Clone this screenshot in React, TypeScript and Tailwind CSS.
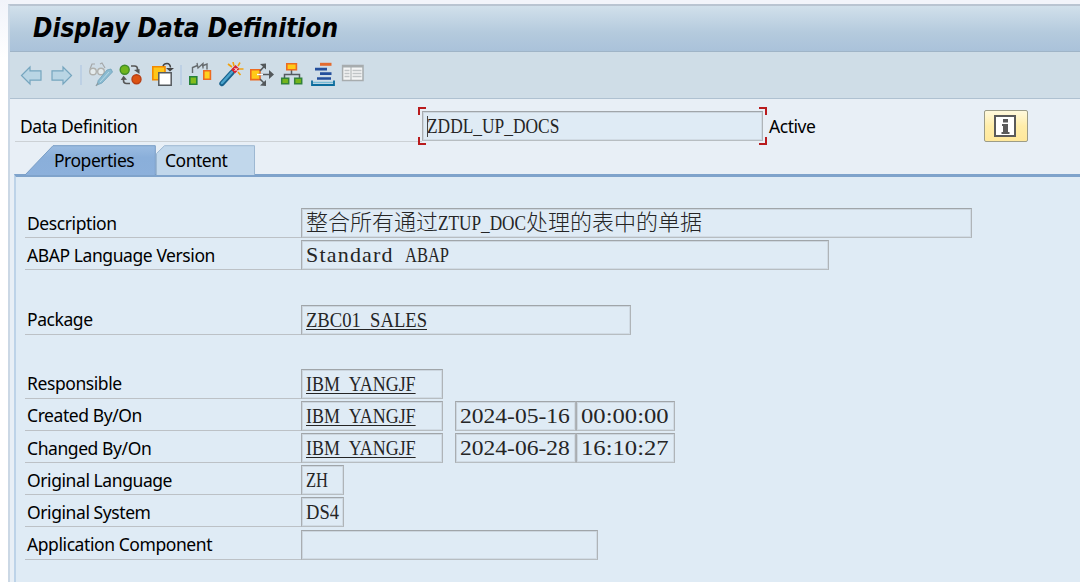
import type { ReactNode } from "react";

const sans = "font-['Noto_Sans',sans-serif]";
const serif = "font-['Liberation_Serif','Noto_Sans_CJK_SC',serif]";

// Toolbar icons share one coordinate space, each glyph shows its own slice
function Glyph({ x, w, className = "", children }: { x: number; w: number; className?: string; children: ReactNode }) {
  return (
    <svg width={w} height="26" viewBox={`${x} 62 ${w} 26`} className={`shrink-0 ${className}`} fill="none">
      {children}
    </svg>
  );
}

function Separator({ className }: { className: string }) {
  return <div className={`h-5 w-0.5 shrink-0 bg-[#bdd0e4] ${className}`} />;
}

function Toolbar() {
  return (
    <div className="flex h-[48px] items-center border-y border-t-[#9fb4c7] border-b-[#afc1d1] bg-[#cfdde7] pl-[10px]">
      <Glyph x={20} w={22}>
        <path d="M21.5 75.5 30 67v3.8h11v9.4H30V84z" fill="#b9d5e4" stroke="#76a6bf" strokeWidth="1.2" />
      </Glyph>
      <Glyph x={51} w={22} className="ml-[9px]">
        <path d="M71.5 75.5 63 67v3.8H52v9.4h11V84z" fill="#b9d5e4" stroke="#76a6bf" strokeWidth="1.2" />
      </Glyph>
      <Separator className="ml-[7px]" />
      <Glyph x={88} w={26} className="ml-[6px]">
        <path d="m90 69 2-5h3m5 0 2-1 3 5" stroke="#a5a8a9" strokeWidth="1.2" />
        <circle cx="93" cy="71.5" r="3.3" fill="#e4ebed" stroke="#b0b1ae" strokeWidth="1.4" />
        <circle cx="101" cy="71.5" r="3.3" fill="#e4ebed" stroke="#b0b1ae" strokeWidth="1.4" />
        <path d="m97 85 1.2-4.5L107 70l4-1 1.5 3L102 83z" fill="#8bbbd1" stroke="#6fa1ba" strokeWidth=".8" />
        <path d="m100 82 9-10" stroke="#b8d9e6" />
        <path d="m96 86 2-3" stroke="#909b9f" strokeWidth="1.3" />
      </Glyph>
      <Glyph x={119} w={24} className="ml-[5px]">
        <circle cx="124.7" cy="69.7" r="4.5" fill="#6fb51d" stroke="#408c29" strokeWidth="1.4" />
        <circle cx="136.5" cy="79.3" r="4.5" fill="#dd5312" stroke="#b84016" strokeWidth="1.4" />
        <path d="M131 66h3.5q3 0 3 3v2" stroke="#555" strokeWidth="1.6" />
        <path d="m134 70 5.5-1v5z" fill="#555" />
        <path d="M130 83.5h-3.5q-3 0-3-3v-2" stroke="#555" strokeWidth="1.6" />
        <path d="m120.7 80 2.8-4.3 3.5 4z" fill="#555" />
      </Glyph>
      <Glyph x={151} w={24} className="ml-[8px]">
        <path d="M152.8 66.8H165v13h-12.2z" fill="#ffc719" stroke="#f28a00" strokeWidth="1.6" />
        <path d="M158.8 72.8h12.4v12.4h-12.4z" fill="#fff" stroke="#555a5e" strokeWidth="1.5" />
        <path d="M163 66q1-2.5 4-2.5t3.5 4" stroke="#444" strokeWidth="1.5" />
        <path d="M166 68h8l-4 3.6z" fill="#444" />
      </Glyph>
      <Separator className="ml-[5px]" />
      <Glyph x={188} w={24} className="ml-[6px]">
        <path d="M192.500 73v-5.500l5-2M202 66l5-2v5.500" stroke="#666b6e" strokeWidth="1.4" />
        <path d="m197 63 1 5 5-4.500v5" stroke="#666b6e" strokeWidth="1.3" />
        <path d="M189.8 76.8h7v7.400h-7z" fill="#83bd1d" stroke="#26813b" strokeWidth="1.6" />
        <path d="M203.8 70.8h6.600v8.400h-6.600z" fill="#ffd21c" stroke="#ed6b20" strokeWidth="1.6" />
      </Glyph>
      <Glyph x={218} w={27} className="ml-[6px]">
        <path d="m222 83.500 10-11" stroke="#17618c" strokeWidth="5.4" strokeLinecap="round" />
        <path d="m222 83 10-11" stroke="#4ba3cc" strokeWidth="2.5" strokeLinecap="round" />
        <path d="m233 71.500 4.500-4.500" stroke="#d9232e" strokeWidth="5.500" />
        <path d="m228 64 4 3m1-5 1 4m4 0 2-3.5m-1 6.500h4.500m-5.500 3 2.500 3" stroke="#f3a10d" strokeWidth="1.6" />
        <path d="m234.500 68 3 3m0-3-3 3" stroke="#fff" strokeWidth="1" />
      </Glyph>
      <Glyph x={249} w={26} className="ml-[4px]">
        <path d="M250.800 69.800H260v9.800h-9.200z" fill="#ffcb17" stroke="#ed6b20" strokeWidth="1.6" />
        <path d="M258 74.500h14M260 71l5-5.500M260 79l5 5" stroke="#53585b" strokeWidth="1.500" />
        <path d="M269 70v9l5-4.500zM260 64l6-.5v6zM260 85.500l6 .5v-6z" fill="#53585b" />
        <path d="M257 74.500h6" stroke="#fff" strokeWidth="1.400" />
      </Glyph>
      <Glyph x={280} w={24} className="ml-[5px]">
        <path d="M291.500 70v4.500M284.500 79v-4.500h15V79" stroke="#555b60" strokeWidth="1.500" />
        <path d="M286.800 63.800h9.600v6h-9.600z" fill="#ffcb17" stroke="#ed6b20" strokeWidth="1.600" />
        <path d="M281.700 78.200h7v5.600h-7zM294.700 78.200h7v5.600h-7z" fill="#74b51b" stroke="#33823a" strokeWidth="1.500" />
      </Glyph>
      <Glyph x={310} w={26} className="ml-[6px]">
        <path d="M320 64.300h11.500" stroke="#e36b2f" strokeWidth="3" />
        <path d="M315 69.100h12M320 73.600h11.500M317 78.500h14" stroke="#244f9c" strokeWidth="2.600" />
        <path d="M312 80.500v4.500h22v-4.500" stroke="#0b6c9d" strokeWidth="1.800" />
        <path d="M313 82.500h20" stroke="#76bad5" strokeWidth="1.500" />
      </Glyph>
      <Glyph x={341} w={24} className="ml-[5px]">
        <path d="M342.600 65.600h20.400v15h-20.400z" fill="#f4f5f5" stroke="#a7acae" strokeWidth="1.500" />
        <path d="M343 66.500h20" stroke="#a7acae" strokeWidth="2" />
        <path d="M351 67v13" stroke="#a7acae" />
        <path d="M344.500 70.500h5m-5 3h5m-5 3h5m3-6h9m-9 3h9m-9 3h9" stroke="#c0c4c6" strokeWidth="1.300" />
      </Glyph>
    </div>
  );
}

function Field({ className, children }: { className: string; children?: ReactNode }) {
  return (
    <div
      className={`flex h-[30px] shrink-0 items-center border-[1.5px] border-t-[#a0a5a9] border-r-[#afb4b8] border-b-[#b7bdc1] border-l-[#a9adb1] bg-[#dfebf5] pl-[4px] text-[22px] leading-[26px] whitespace-pre text-[#252525] shadow-[inset_1px_1px_#ccd6df,inset_-1px_-1px_#d1dbe4] ${serif} ${className}`}
    >
      {children}
    </div>
  );
}

function Row({ label, className = "", children }: { label: string; className?: string; children: ReactNode }) {
  return (
    <div className={`flex items-end ${className}`}>
      <div className="flex h-[30px] w-[276px] shrink-0 items-center border-b-[1.5px] border-[#bcc1c6] pl-[2px] text-[17.5px] tracking-[-0.42px] whitespace-nowrap">
        {label}
      </div>
      {children}
    </div>
  );
}

function UserName() {
  return <span className="origin-left scale-x-[0.815] underline decoration-1 underline-offset-2">IBM_YANGJF</span>;
}

function Stamp({ date, time }: { date: string; time: string }) {
  return (
    <>
      <Field className="ml-[12px] w-[121px]">
        <span className="origin-left scale-x-[1.07]">{date}</span>
      </Field>
      <Field className="w-[99px]">
        <span className="origin-left scale-x-[1.12]">{time}</span>
      </Field>
    </>
  );
}

function Header() {
  return (
    <div className="flex h-[43px] shrink-0 items-start pl-[5px] text-[17.5px] tracking-[-0.45px]">
      <div className="mt-[12px] flex h-[31px] w-[407px] items-center border-b-[1.5px] border-[#ccd1d5] pl-[5px]">Data Definition</div>
      <div className="relative mt-[12px] w-[341px] tracking-normal">
        <Field className="w-[341px]">
          <span className="origin-left scale-x-[0.79]">ZDDL_UP_DOCS</span>
        </Field>
        <i className="absolute top-[5px] left-[5px] h-[21px] w-px bg-[#444]" />
        <i className="absolute -top-[4px] -left-[4px] size-[8px] border-t-2 border-l-2 border-[#b91b1d]" />
        <i className="absolute -top-[4px] -right-[4px] size-[8px] border-t-2 border-r-2 border-[#b91b1d]" />
        <i className="absolute -bottom-[4px] -left-[4px] size-[8px] border-b-2 border-l-2 border-[#b91b1d]" />
        <i className="absolute -right-[4px] -bottom-[4px] size-[8px] border-b-2 border-r-2 border-[#b91b1d]" />
      </div>
      <div className="mt-[12px] ml-[6px] flex h-[31px] w-[215px] items-center">Active</div>
      <button className="mt-[11px] flex h-[32px] w-[44px] items-center justify-center rounded-[2px] border-[1.5px] border-[#9c9c87] bg-linear-to-b from-[#fff9dd] via-[#ffeda9] to-[#ffe89c]">
        <svg width="22" height="22" viewBox="0 0 22 22" className="-ml-[3px]">
          <path d="M1 1h20v20H1z" fill="#fff" stroke="#5a5a5a" strokeWidth="2" />
          <path d="M9 4h5v3.500H9zM8 9h6v8h1.500v2H7.500v-2H9v-6H8z" fill="#5a5a5a" />
        </svg>
      </button>
    </div>
  );
}

function Tabs() {
  return (
    <div className="flex h-[32px] shrink-0 items-end pl-[14px] tracking-[-0.48px]">
      <div className="relative h-[29px] w-[132px] text-[17.5px]">
        <svg className="absolute inset-0" width="132" height="30" viewBox="0 0 132 30">
          <defs>
            <linearGradient id="active-tab" x2="0" y2="1">
              <stop stopColor="#9bbce1" />
              <stop offset=".4" stopColor="#8aafda" />
              <stop offset="1" stopColor="#8cb0db" />
            </linearGradient>
          </defs>
          <path d="M1 30 29 .7h102.300V30" fill="url(#active-tab)" stroke="#789dc5" />
        </svg>
        <span className="relative ml-[30px] leading-[31px]">Properties</span>
      </div>
      <div className="relative h-[29px] w-[99px] text-[17.5px]">
        <svg className="absolute inset-0" width="99" height="30" viewBox="0 0 99 30">
          <path d="M.5 30V8.500l8-7.800h90V30" fill="#c1d7eb" stroke="#9db8d2" />
        </svg>
        <span className="relative ml-[9px] leading-[31px]">Content</span>
      </div>
    </div>
  );
}

export default function App() {
  return (
    <main className={`flex h-[582px] w-[1080px] overflow-hidden bg-[#f2f4fa] text-black ${sans}`}>
      <div className="w-[8px] shrink-0 bg-linear-to-b from-[#f1f3fa] via-white via-10% to-white" />
      <div className="mt-[4px] flex min-w-0 flex-1 flex-col border-t-2 border-l-2 border-t-[#b9c4d1] border-l-[#cbd8e5] bg-[#e8eff6]">
        <header className="flex h-[45px] shrink-0 items-center bg-linear-to-b from-[#d1e0eb] via-[#b4cadd] via-60% to-[#aac2da] pl-[23px]">
          <h1 className="-mt-[2px] font-['DejaVu_Sans_Condensed','DejaVu_Sans',sans-serif] text-[26px] leading-none font-bold whitespace-nowrap italic">
            Display Data Definition
          </h1>
        </header>
        <Toolbar />
        <Header />
        <Tabs />
        <section className="ml-[4px] grid flex-1 auto-rows-[32.150px] content-start border-t-[3px] border-l-2 border-t-[#7fa3cb] border-l-[#bdd3e8] bg-[#dfebf5] pt-[29px] pl-[9px]">
          <Row label="Description">
            <Field className="w-[671px]">
              <span className="font-light">整合所有通过</span>
              <span className="w-[88px] origin-left scale-x-[0.783]">ZTUP_DOC</span>
              <span className="font-light">处理的表中的单据</span>
            </Field>
          </Row>
          <Row label="ABAP Language Version">
            <Field className="w-[528px]">
              <span className="w-[99px] tracking-[1.2px]">Standard </span>
              <span className="origin-left scale-x-[0.75]">ABAP</span>
            </Field>
          </Row>
          <Row label="Package" className="row-start-4">
            <Field className="w-[330px]">
              <span className="origin-left scale-x-[0.846] underline decoration-1 underline-offset-2">ZBC01_SALES</span>
            </Field>
          </Row>
          <Row label="Responsible" className="row-start-6">
            <Field className="w-[142px]">
              <UserName />
            </Field>
          </Row>
          <Row label="Created By/On" className="row-start-7">
            <Field className="w-[142px]">
              <UserName />
            </Field>
            <Stamp date="2024-05-16" time="00:00:00" />
          </Row>
          <Row label="Changed By/On" className="row-start-8">
            <Field className="w-[142px]">
              <UserName />
            </Field>
            <Stamp date="2024-06-28" time="16:10:27" />
          </Row>
          <Row label="Original Language" className="row-start-9">
            <Field className="w-[43px]">
              <span className="origin-left scale-x-[0.75]">ZH</span>
            </Field>
          </Row>
          <Row label="Original System" className="row-start-10">
            <Field className="w-[43px]">
              <span className="origin-left scale-x-[0.843]">DS4</span>
            </Field>
          </Row>
          <Row label="Application Component" className="row-start-11">
            <Field className="w-[297px]" />
          </Row>
        </section>
      </div>
    </main>
  );
}
